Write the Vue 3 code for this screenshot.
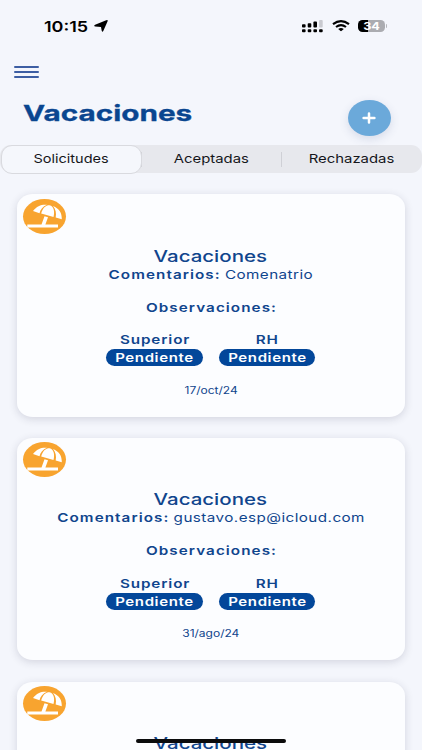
<script setup>
const tabs = ['Solicitudes', 'Aceptadas', 'Rechazadas']
const requests = [
  { comment: 'Comenatrio', date: '17/oct/24' },
  { comment: 'gustavo.esp@icloud.com', date: '31/ago/24' },
]
</script>

<template>
  <main class="screen">
    <header class="status">
      <div class="clock">
        <span class="time">10:15</span>
        <svg class="arrow" viewBox="0 0 14 12"><path d="M13.6 1.2 9.4 10.8Q8.4 12.6 7.7 10.8L7 6.9 1.2 6.5Q-.7 5.9 1.1 4.8L12.2.2Q14.2-.3 13.6 1.2Z" /></svg>
      </div>
      <div class="signals">
        <svg class="cell" viewBox="0 0 21 13">
          <rect x="0" y="4.2" width="3.6" height="3.2" rx=".9" /><rect x="5.7" y="3.2" width="3.6" height="4.2" rx=".9" />
          <rect x="11.4" y="1.6" width="3.6" height="5.8" rx=".9" /><rect class="dim" x="17.1" y="0" width="3.6" height="7.4" rx=".9" />
          <rect x="0" y="9.2" width="3.6" height="3" rx=".9" /><rect x="5.7" y="9.2" width="3.6" height="3" rx=".9" />
          <rect x="11.4" y="9.2" width="3.6" height="3" rx=".9" /><rect x="17.1" y="9.2" width="3.6" height="3" rx=".9" />
        </svg>
        <svg class="wifi" viewBox="0 0 18 12">
          <path class="wave" d="M1 4.2Q9-2 17 4.2M4 7Q9 3.2 14 7" /><path d="M6.2 8.9Q9 6.9 11.8 8.9L9.4 11.1Q9 11.4 8.6 11.1Z" />
        </svg>
        <div class="battery"><span class="percent">34</span></div>
        <i class="nub"></i>
      </div>
    </header>

    <button class="menu" aria-label="Menú"><i></i><i></i><i></i></button>

    <div class="heading">
      <h1>Vacaciones</h1>
      <button class="add" aria-label="Agregar">
        <svg viewBox="0 0 14 12"><path d="M7 1.4v9.2M1.6 6h10.8" /></svg>
      </button>
    </div>

    <nav class="tabs">
      <button v-for="(tab, i) in tabs" :key="tab" class="tab" :class="{ active: i === 0 }">
        <span>{{ tab }}</span>
      </button>
    </nav>

    <section class="list">
      <article v-for="(item, i) in requests" :key="i" class="card">
        <div class="badge">
          <svg viewBox="0 0 43 35">
            <path d="M10 12C14 6.8 18.5 5.3 24 5.8 19.7 7.5 17.5 10.5 16.5 14.2Z" />
            <path d="M18.2 14.6C19.6 8.8 22.5 6.2 26.5 6.2 31 7 31.8 12.5 30.5 18Z" />
            <path d="M30 7C36 9.3 39 13.8 38.8 20.2L32.7 18.5C33.5 14 32.7 10 30 7Z" />
            <path d="M21.5 17.3 25 18.2 22.4 25.5H35V28.6H4.3V25.5H18.5Z" />
          </svg>
        </div>
        <div class="body">
          <h2><span>Vacaciones</span></h2>
          <p class="comments"><b>Comentarios:</b><span>{{ item.comment }}</span></p>
          <p class="notes"><b>Observaciones:</b></p>
          <div class="approvals">
            <div class="approval"><b>Superior</b><em><span>Pendiente</span></em></div>
            <div class="approval"><b>RH</b><em><span>Pendiente</span></em></div>
          </div>
          <time>{{ item.date }}</time>
        </div>
      </article>
      <article class="card">
        <div class="badge">
          <svg viewBox="0 0 43 35">
            <path d="M10 12C14 6.8 18.5 5.3 24 5.8 19.7 7.5 17.5 10.5 16.5 14.2Z" />
            <path d="M18.2 14.6C19.6 8.8 22.5 6.2 26.5 6.2 31 7 31.8 12.5 30.5 18Z" />
            <path d="M30 7C36 9.3 39 13.8 38.8 20.2L32.7 18.5C33.5 14 32.7 10 30 7Z" />
            <path d="M21.5 17.3 25 18.2 22.4 25.5H35V28.6H4.3V25.5H18.5Z" />
          </svg>
        </div>
        <div class="body">
          <h2><span>Vacaciones</span></h2>
        </div>
      </article>
    </section>
    <div class="home-bar"></div>
  </main>
</template>

<style>
body {
  margin: 0;
  background: #f4f6fc;
}
</style>

<style scoped>
* {
  box-sizing: border-box;
}
.screen {
  position: relative;
  height: 750px;
  overflow: hidden;
  background: #f4f6fc;
  font-family: Inter, "Liberation Sans", sans-serif;
  color: #10458d;
}
button {
  border: 0;
  padding: 0;
  background: none;
  font: inherit;
}
h1, h2, p {
  margin: 0;
}
svg {
  display: block;
}
.status {
  height: 52px;
  padding: 0 35px 0 44px;
  display: flex;
  align-items: center;
  justify-content: space-between;
  color: #000;
}
.clock, .signals {
  display: flex;
  align-items: center;
}
.time {
  width: 50px;
  font-size: 15px;
  font-weight: 600;
  transform: scaleX(1.2);
  transform-origin: left;
}
.arrow {
  width: 14px;
  height: 12px;
}
.cell {
  width: 21px;
  height: 13px;
}
.cell .dim {
  fill: #c9cad0;
}
.wifi {
  width: 18px;
  height: 12px;
  margin: 0 8px 0 8.5px;
}
.wave {
  fill: none;
  stroke: #000;
  stroke-width: 2.1;
}
.battery {
  width: 27px;
  height: 12px;
  border-radius: 4.5px;
  background: linear-gradient(90deg, #000 36%, #abacb1 36%);
  color: #fff;
  text-align: center;
  line-height: 12.5px;
}
.percent {
  display: block;
  font-size: 11px;
  font-weight: 700;
  transform: scaleX(1.15);
}
.nub {
  width: 1.5px;
  height: 4px;
  margin-left: 1px;
  border-radius: 0 2px 2px 0;
  background: #b5b6bb;
}
.menu {
  display: flex;
  flex-direction: column;
  gap: 3.2px;
  margin: 14px 0 0 14px;
}
.menu i {
  width: 25px;
  height: 1.9px;
  border-radius: 1px;
  background: #3d5ea3;
}
.heading {
  display: flex;
  justify-content: space-between;
  height: 67px;
  padding: 22px 31.5px 0 22.5px;
}
h1 {
  font-size: 22px;
  line-height: 26px;
  font-weight: 700;
  color: #0a4690;
  -webkit-text-stroke: .3px #0a4690;
  transform: scaleX(1.35);
  transform-origin: left;
}
.add {
  width: 43px;
  height: 36px;
  display: grid;
  place-items: center;
  border-radius: 50%;
  background: #6ba9da;
  box-shadow: 0 3px 10px rgba(60, 80, 130, .16);
}
.add svg {
  width: 14px;
  height: 12px;
  fill: none;
  stroke: #fff;
  stroke-width: 2.5;
  stroke-linecap: round;
}
.tabs {
  display: grid;
  grid-template-columns: 141.5px 140.5px 1fr;
  height: 28px;
  border-radius: 11px;
  background: #e7e8ed;
}
.tab {
  display: grid;
  place-items: center;
  font-size: 12px;
  color: #15161b;
  background: linear-gradient(#cfd0d6, #cfd0d6) right center / 1px 15px no-repeat;
}
.tab:last-child {
  background: none;
}
.tab span {
  padding-bottom: 2px;
  transform: scaleX(1.24);
}
.tab.active {
  position: relative;
}
.tab.active::before {
  content: "";
  grid-area: 1 / 1;
  justify-self: start;
  width: 139px;
  height: 27px;
  margin-left: 1px;
  border: 1.5px solid #d9dadf;
  border-radius: 11px;
  background: #f5f7fc;
}
.tab.active span {
  grid-area: 1 / 1;
  z-index: 1;
  transform: scaleX(1.21);
}
.list {
  display: flex;
  flex-direction: column;
  gap: 21.2px;
  padding: 21.2px 17.5px 0 17px;
}
.card {
  flex: none;
  height: 222.5px;
  padding: 4.5px 6px 0;
  border-radius: 16px / 14px;
  background: #fcfdff;
  box-shadow: 0 2px 9px rgba(40, 40, 70, .16);
}
.badge {
  width: 43px;
  height: 35px;
  border-radius: 50%;
  background: #f8a42f;
}
.badge path {
  fill: #fff;
}
.body {
  display: flex;
  flex-direction: column;
  align-items: center;
  padding-top: 13px;
}
h2 {
  height: 19px;
  font-size: 16px;
  line-height: 19px;
  font-weight: 500;
}
h2 span {
  display: inline-block;
  transform: scaleX(1.28);
}
b {
  font-weight: 600;
  letter-spacing: .85px;
  margin-right: -.85px;
}
p {
  height: 18px;
  font-size: 12.2px;
  line-height: 18px;
  white-space: nowrap;
}
.comments {
  display: flex;
  gap: 4.2px;
  transform: scaleX(1.25);
}
.comments span {
  letter-spacing: .35px;
}
.notes {
  margin-top: 15px;
  transform: scaleX(1.25);
}
.approvals {
  display: flex;
  gap: 16px;
  margin-top: 14.5px;
}
.approval {
  width: 96.7px;
  display: flex;
  flex-direction: column;
  align-items: center;
}
.approval b {
  font-size: 12.2px;
  line-height: 18px;
  letter-spacing: .7px;
  transform: scaleX(1.25);
}
em {
  width: 100%;
  height: 17px;
  border-radius: 9px;
  background: #03479a;
  color: #fff;
  font-size: 12px;
  line-height: 17px;
  font-style: normal;
  font-weight: 600;
  text-align: center;
}
em span {
  display: inline-block;
  letter-spacing: .5px;
  margin-right: -.5px;
  transform: scaleX(1.25);
}
time {
  margin-top: 16.5px;
  height: 14px;
  font-size: 10px;
  line-height: 14px;
  transform: scaleX(1.2);
}
.home-bar {
  position: absolute;
  left: 136px;
  bottom: 7.5px;
  width: 150px;
  height: 4px;
  border-radius: 2px;
  background: #0b0b0c;
}
</style>
